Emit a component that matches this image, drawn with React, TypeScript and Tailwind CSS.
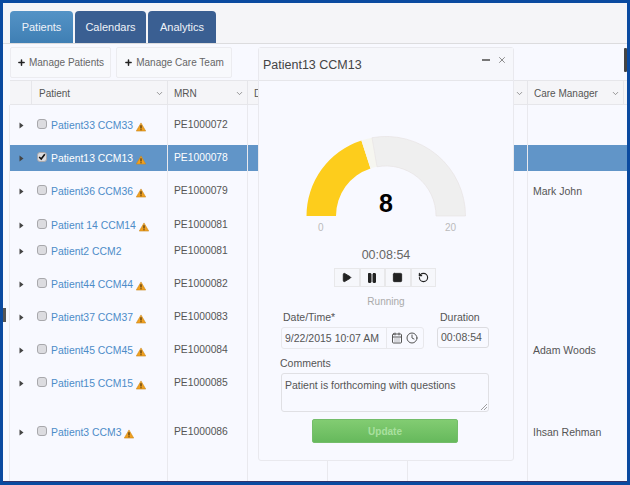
import React from 'react';
import { CalendarDays, Clock, Pause, Play, Plus, RotateCcw, Square, X, ChevronDown } from 'lucide-react';

type Patient = { name: string; mrn: string; manager?: string; warn: boolean; height: number; top: number; selected?: boolean };

const patients: Patient[] = [
    { name: 'Patient33 CCM33', mrn: 'PE1000072', warn: true, height: 40, top: 12 },
    { name: 'Patient13 CCM13', mrn: 'PE1000078', warn: true, height: 26, top: 5, selected: true },
    { name: 'Patient36 CCM36', mrn: 'PE1000079', manager: 'Mark John', warn: true, height: 34, top: 12 },
    { name: 'Patient 14 CCM14', mrn: 'PE1000081', warn: true, height: 26, top: 12 },
    { name: 'Patient2 CCM2', mrn: 'PE1000081', warn: false, height: 33, top: 12 },
    { name: 'Patient44 CCM44', mrn: 'PE1000082', warn: true, height: 33, top: 12 },
    { name: 'Patient37 CCM37', mrn: 'PE1000083', warn: true, height: 33, top: 12 },
    { name: 'Patient45 CCM45', mrn: 'PE1000084', manager: 'Adam Woods', warn: true, height: 33, top: 12 },
    { name: 'Patient15 CCM15', mrn: 'PE1000085', warn: true, height: 49, top: 12 },
    { name: 'Patient3 CCM3', mrn: 'PE1000086', manager: 'Ihsan Rehman', warn: true, height: 69, top: 12 },
];

const WarnIcon = () => (
    <svg width="10" height="10" viewBox="0 0 11 10" className="ml-[3px] mt-[5px] shrink-0">
        <path d="M5.5 0.5 L10.7 9.5 H0.3 Z" fill="#f0a020" stroke="#c9861a" strokeWidth="0.6" strokeLinejoin="round" />
        <path d="M5.5 3 V6.6 M5.5 7.4 V8.6" stroke="#3a2a10" strokeWidth="1.2" />
    </svg>
);

const Caret = () => (
    <svg width="5" height="7" viewBox="0 0 5 7" className="shrink-0">
        <path d="M0.5 0.5 L4.5 3.5 L0.5 6.5 Z" fill="#444" />
    </svg>
);

const CheckBox = ({ checked }: { checked?: boolean }) => (
    <span className="flex h-[10px] w-[10px] shrink-0 items-center justify-center rounded-[3px] border border-[#a8a8ac] bg-[#dcdce0]">
        {checked && (
            <svg width="10" height="10" viewBox="0 0 10 10">
                <path d="M1.5 5 L4 7.5 L8.5 1.5" fill="none" stroke="#111" strokeWidth="2" />
            </svg>
        )}
    </span>
);

const HeaderCell = ({ label, className }: { label?: string; className: string }) => (
    <div className={`flex h-full shrink-0 items-center border-r border-[#e6e6ea] pt-[2px] ${className}`}>
        <span className="flex-1 truncate">{label}</span>
        <ChevronDown size={9} className="mr-[3px] text-[#777]" />
    </div>
);

// gauge is 8 of 20, wedges computed by hand around centre 100,84
const Gauge = () => (
    <svg width="200" height="100" viewBox="0 0 200 100" className="block">
        <path d="M20.5 84 A79.5 79.5 0 0 1 75.4 8.4 L84.5 36.4 A50 50 0 0 0 50 84 Z" fill="#fdcd1c" />
        <path d="M75.4 8.4 A79.5 79.5 0 0 1 86 5.7 L91 34.8 A50 50 0 0 0 84.5 36.4 Z" fill="#f6f6f0" />
        <path d="M86 5.7 A79.5 79.5 0 0 1 179.5 84 H150 A50 50 0 0 0 91 34.8 Z" fill="#efefef" stroke="#e6e0e0" strokeWidth="0.6" />
    </svg>
);

const TimerButton = ({ children }: { children: React.ReactNode }) => (
    <button className="flex h-[19px] w-[25.5px] items-center justify-center border border-[#e8e8ea] bg-[#f6f7fb] text-[#222]">
        {children}
    </button>
);

const PatientModal = () => (
    <div className="absolute left-[255px] top-[44px] flex h-[414px] w-[256px] flex-col rounded-[3px] border border-[#e9e9ee] bg-[#f8f9ff] text-[#555]">
        <div className="flex h-[33px] shrink-0 items-start justify-between border-b border-[#e6e6ea] bg-[#f6f7fb] pl-[4px] pr-[6px]">
            <span className="mt-[9px] text-[12.5px] leading-[16px] text-[#444]">Patient13 CCM13</span>
            <div className="mt-[7px] flex items-center gap-[7px] text-[#777]">
                <span className="h-[2px] w-[8px] bg-[#777]" />
                <X size={10} />
            </div>
        </div>
        <div className="ml-[27px] mt-[51px] w-[200px]">
            <div className="relative">
                <Gauge />
                <span className="absolute left-0 right-0 top-[57px] text-center text-[25px] font-bold leading-[28px] text-black">8</span>
            </div>
            <div className="-mt-[10px] flex justify-between pl-[32px] pr-[30px] text-[10px] leading-[12px] text-[#bbb]">
                <span>0</span>
                <span>20</span>
            </div>
        </div>
        <div className="mt-[13px] text-center text-[12.5px] leading-[16px] text-[#666]">00:08:54</div>
        <div className="mt-[5px] flex justify-center -translate-x-[1px]">
            <TimerButton><Play size={11} fill="currentColor" /></TimerButton>
            <TimerButton><Pause size={12} fill="currentColor" /></TimerButton>
            <TimerButton><Square size={11} fill="currentColor" /></TimerButton>
            <TimerButton><RotateCcw size={11} strokeWidth={2.5} /></TimerButton>
        </div>
        <div className="mt-[8px] text-center text-[10px] leading-[14px] text-[#aaa]">Running</div>
        <div className="mt-[1px] flex pl-[22px]">
            <div>
                <div className="pl-[2px] text-[10.5px] leading-[14px]">Date/Time*</div>
                <div className="mt-[3px] flex h-[22px] w-[143px] items-center rounded-[3px] border border-[#e8e8ec] text-[10.5px]">
                    <span className="w-[105px] whitespace-nowrap border-r border-[#e8e8ec] pl-[3px] leading-[20px]">9/22/2015 10:07 AM</span>
                    <CalendarDays size={12} className="ml-[4px]" />
                    <Clock size={12} className="ml-[3px]" />
                </div>
            </div>
            <div className="ml-[13px]">
                <div className="pl-[3px] text-[10.5px] leading-[14px]">Duration</div>
                <div className="mt-[3px] flex h-[21px] w-[52px] items-center rounded-[3px] border border-[#dcdce0] pl-[3px] text-[10.5px]">00:08:54</div>
            </div>
        </div>
        <div className="mt-[7px] pl-[21px] text-[10.5px] leading-[14px]">Comments</div>
        <div className="relative ml-[22px] mt-[3px] h-[39px] w-[208px] rounded-[3px] border border-[#e0e0e4] px-[3px] py-[4px] text-[10.5px] leading-[14px]">
            Patient is forthcoming with questions
            <svg width="6" height="6" viewBox="0 0 6 6" className="absolute bottom-[1px] right-[1px]">
                <path d="M0 6 L6 0 M3 6 L6 3" stroke="#888" strokeWidth="0.8" />
            </svg>
        </div>
        <button className="ml-[53px] mt-[7px] h-[24px] w-[146px] rounded-[2px] border border-[#74bd6a] bg-gradient-to-b from-[#82cc72] to-[#66b95c] text-[10px] font-bold text-[#a9e09f]">
            Update
        </button>
    </div>
);

const App: React.FC = () => {
    return (
        <div className="h-[485px] w-[630px] overflow-hidden border-b-[3px] border-l-[3px] border-r-[3px] border-t-[3px] border-[#0a4aa0] bg-[#f8f9ff] font-['Liberation_Sans',sans-serif] text-[10.5px] text-[#555]">
            <div className="relative h-full border-b border-[#34346a]">
                {/* Tabs */}
                <div className="flex h-[41px] items-end gap-[2px] border-b border-[#dcdcde] bg-[#f5f5f8] pl-[7px] text-[11px] font-medium text-[#eef2f8]">
                    <div className="flex h-[32px] w-[63px] items-center justify-center rounded-t-[4px] bg-gradient-to-b from-[#5493c6] to-[#3f7fb4]">Patients</div>
                    <div className="flex h-[32px] w-[71px] items-center justify-center rounded-t-[4px] bg-[#3a5f92]">Calendars</div>
                    <div className="flex h-[32px] w-[68px] items-center justify-center rounded-t-[4px] bg-[#3a5f92]">Analytics</div>
                </div>

                {/* Toolbar */}
                <div className="flex h-[36px] items-start gap-[5px] pl-[7px] pt-[3px] text-[10px] text-[#666]">
                    <button className="flex h-[31px] w-[101px] items-center justify-center gap-[3px] rounded-[2px] border border-[#ececf0] bg-[#f8f9fc]">
                        <Plus size={9} strokeWidth={4} className="text-[#222]" />Manage Patients
                    </button>
                    <button className="flex h-[31px] w-[116px] items-center justify-center gap-[3px] rounded-[2px] border border-[#ececf0] bg-[#f8f9fc]">
                        <Plus size={9} strokeWidth={4} className="text-[#222]" />Manage Care Team
                    </button>
                </div>

                {/* Table header */}
                <div className="ml-[7px] flex h-[25px] items-center border-b border-t border-[#e6e6ea] bg-[#f5f5f8] text-[10px]">
                    <div className="h-full w-[22px] shrink-0 border-r border-[#e6e6ea]" />
                    <HeaderCell label="Patient" className="w-[136px] pl-[7px]" />
                    <HeaderCell label="MRN" className="w-[80px] pl-[6px]" />
                    <HeaderCell label="DOB" className="w-[80px] pl-[6px]" />
                    <HeaderCell className="w-[80px]" />
                    <HeaderCell className="w-[120px]" />
                    <HeaderCell label="Care Manager" className="w-[96px] pl-[6px]" />
                </div>

                {/* Table rows */}
                {patients.map((p) => (
                    <div
                        key={p.name}
                        style={{ height: p.height }}
                        className={`ml-[6px] flex border-l border-[#e9e9ee] ${p.selected ? 'bg-[#6195c8] text-white' : ''}`}
                    >
                        <div className="flex w-[22px] shrink-0 justify-center" style={{ paddingTop: p.top + 5 }}>
                            <Caret />
                        </div>
                        <div className="flex w-[136px] shrink-0 items-start border-r border-[#e9e9ee] pl-[5px] pr-[2px]" style={{ paddingTop: p.top }}>
                            <span className="mr-[4px] mt-[2px]"><CheckBox checked={p.selected} /></span>
                            <span className={`mt-[1px] whitespace-nowrap text-[10.4px] leading-[16px] ${p.selected ? 'text-white' : 'text-[#4d8cc8]'}`}>{p.name}</span>
                            {p.warn && <WarnIcon />}
                        </div>
                        <div className="w-[80px] shrink-0 border-r border-[#e9e9ee] pl-[6px] text-[10.3px] leading-[14px]" style={{ paddingTop: p.top + 1 }}>{p.mrn}</div>
                        <div className="w-[80px] shrink-0 border-r border-[#e9e9ee]" />
                        <div className="w-[80px] shrink-0 border-r border-[#e9e9ee]" />
                        <div className="w-[120px] shrink-0 border-r border-[#e9e9ee]" />
                        <div className="w-[96px] shrink-0 pl-[5px] leading-[14px]" style={{ paddingTop: p.top + 1 }}>{p.manager}</div>
                    </div>
                ))}

                {/* Splitter handle and the scroll grip on the right */}
                <span className="absolute left-0 top-[305px] h-[14px] w-[3px] bg-[#555]" />
                <span className="absolute right-0 top-[45px] h-[24px] w-[3px] rounded-[1px] bg-[#444]" />

                <PatientModal />
            </div>
        </div>
    );
};

export default App;
